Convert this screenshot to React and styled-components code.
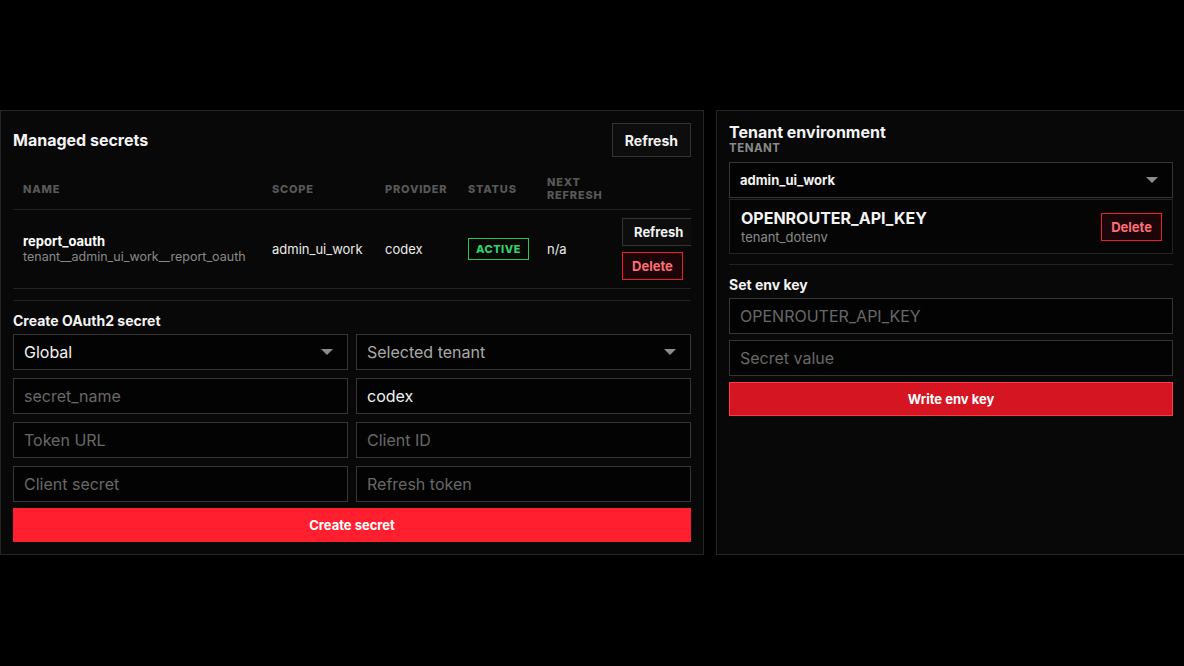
import React from "react";
import styled, { createGlobalStyle } from "styled-components";

const GlobalStyle = createGlobalStyle`
  html, body {
    margin: 0;
    background: #000;
    overflow: hidden;
  }
  * {
    box-sizing: border-box;
  }
  body {
    font-family: Inter, "Noto Sans", "Liberation Sans", sans-serif;
    color: #f2f2f2;
  }
`;

const secrets = [
  {
    name: "report_oauth",
    path: "tenant__admin_ui_work__report_oauth",
    scope: "admin_ui_work",
    provider: "codex",
    status: "ACTIVE",
    next: "n/a",
  },
];

function App() {
  return (
    <>
      <GlobalStyle />
      <Page>
        <Panel>
          <PanelHeader>
            <Title>Managed secrets</Title>
            <GhostButton $size="lg">Refresh</GhostButton>
          </PanelHeader>
          <TableWrap>
            <Table>
              <colgroup>
                <col style={{ width: 249 }} />
                <col style={{ width: 113 }} />
                <col style={{ width: 83 }} />
                <col style={{ width: 79 }} />
                <col style={{ width: 75 }} />
                <col style={{ width: 99 }} />
              </colgroup>
              <thead>
                <tr>
                  <Th>Name</Th>
                  <Th>Scope</Th>
                  <Th>Provider</Th>
                  <Th>Status</Th>
                  <Th>
                    Next
                    <br />
                    Refresh
                  </Th>
                  <Th />
                </tr>
              </thead>
              <tbody>
                {secrets.map((s) => (
                  <tr key={s.name}>
                    <Td>
                      <SecretName>{s.name}</SecretName>
                      <SubText>{s.path}</SubText>
                    </Td>
                    <Td>{s.scope}</Td>
                    <Td>{s.provider}</Td>
                    <Td>
                      <Badge>{s.status}</Badge>
                    </Td>
                    <Td>{s.next}</Td>
                    <ActionCell>
                      <Actions>
                        <GhostButton>Refresh</GhostButton>
                        <DangerButton>Delete</DangerButton>
                      </Actions>
                    </ActionCell>
                  </tr>
                ))}
              </tbody>
            </Table>
          </TableWrap>
          <Section>
            <SectionTitle>Create OAuth2 secret</SectionTitle>
            <FormGrid>
              <SelectBox>Global</SelectBox>
              <SelectBox $muted>Selected tenant</SelectBox>
              <Input placeholder="secret_name" />
              <Input defaultValue="codex" />
              <Input placeholder="Token URL" />
              <Input placeholder="Client ID" />
              <Input placeholder="Client secret" />
              <Input placeholder="Refresh token" />
            </FormGrid>
            <PrimaryButton>Create secret</PrimaryButton>
          </Section>
        </Panel>

        <Panel>
          <Title>Tenant environment</Title>
          <FieldLabel>Tenant</FieldLabel>
          <SelectBox $bold>admin_ui_work</SelectBox>
          <EnvItem>
            <div>
              <EnvKey>OPENROUTER_API_KEY</EnvKey>
              <EnvSource>tenant_dotenv</EnvSource>
            </div>
            <DangerButton>Delete</DangerButton>
          </EnvItem>
          <Section $tight>
            <SectionTitle>Set env key</SectionTitle>
            <Stack>
              <Input placeholder="OPENROUTER_API_KEY" />
              <Input placeholder="Secret value" />
              <PrimaryButton $dark>Write env key</PrimaryButton>
            </Stack>
          </Section>
        </Panel>
      </Page>
    </>
  );
}

const Page = styled.div`
  display: grid;
  grid-template-columns: 704px 470px;
  gap: 12px;
  width: 1186px;
  padding-top: 110px;
`;

const Panel = styled.section`
  display: flex;
  flex-direction: column;
  background: #080808;
  border: 1px solid #242424;
  padding: 12px;
`;

const PanelHeader = styled.div`
  display: flex;
  align-items: center;
  justify-content: space-between;
  margin-bottom: 6px;
`;

const Title = styled.h2`
  margin: 0;
  font-size: 16px;
  line-height: 19px;
  font-weight: 700;
  color: #f4f4f4;
`;

const FieldLabel = styled.div`
  font-size: 11.5px;
  line-height: 13px;
  font-weight: 700;
  letter-spacing: 0.5px;
  text-transform: uppercase;
  color: #8a8a8a;
  margin-bottom: 7px;
`;

const GhostButton = styled.button`
  height: ${(p) => (p.$size === "lg" ? "34px" : "28px")};
  padding: 0 ${(p) => (p.$size === "lg" ? "12px" : "11px")};
  background: #0d0d0d;
  border: 1px solid #333;
  color: #f2f2f2;
  font-family: inherit;
  font-size: ${(p) => (p.$size === "lg" ? "14px" : "13px")};
  font-weight: 700;
  white-space: nowrap;
  cursor: pointer;
`;

const DangerButton = styled.button`
  height: 28px;
  padding: 0 9px;
  background: #1c0508;
  border: 1px solid #e8202e;
  color: #ff6d79;
  font-family: inherit;
  font-size: 13px;
  font-weight: 700;
  cursor: pointer;
`;

const TableWrap = styled.div`
  overflow: hidden;
  width: 100%;
`;

const Table = styled.table`
  width: 698px;
  border-collapse: collapse;
  table-layout: fixed;
  font-size: 13px;
`;

const Th = styled.th`
  text-align: left;
  padding: 13px 10px 7px;
  font-size: 11px;
  line-height: 13px;
  font-weight: 800;
  letter-spacing: 0.8px;
  text-transform: uppercase;
  color: #585858;
  border-bottom: 1px solid #222;
  vertical-align: middle;
`;

const Td = styled.td`
  padding: 0 10px;
  color: #ececec;
  border-bottom: 1px solid #222;
  vertical-align: middle;
  white-space: nowrap;
`;

const ActionCell = styled(Td)`
  padding: 8px 10px;
`;

const Actions = styled.div`
  display: flex;
  flex-direction: column;
  align-items: flex-start;
  gap: 6px;
`;

const SecretName = styled.div`
  font-weight: 700;
  font-size: 13px;
  line-height: 16px;
  color: #fff;
`;

const SubText = styled.div`
  font-size: 12.5px;
  line-height: 16px;
  color: #8a8a8a;
`;

const Badge = styled.span`
  display: inline-block;
  padding: 3px 7px;
  border: 1px solid #27c45f;
  color: #2fd36c;
  font-size: 11px;
  line-height: 14px;
  font-weight: 800;
  letter-spacing: 0.5px;
`;

const Section = styled.div`
  border-top: 1px solid #222;
  margin-top: ${(p) => (p.$tight ? "10px" : "11px")};
  padding-top: 11px;
`;

const SectionTitle = styled.h3`
  margin: 0 0 5px;
  font-size: 14px;
  line-height: 17px;
  font-weight: 700;
  color: #f4f4f4;
`;

const FormGrid = styled.div`
  display: grid;
  grid-template-columns: 1fr 1fr;
  gap: 8px;
  margin-bottom: 6px;
`;

const Stack = styled.div`
  display: flex;
  flex-direction: column;
  gap: 6px;
`;

const fieldBase = `
  height: 36px;
  width: 100%;
  background: #030303;
  border: 1px solid #353535;
  padding: 0 10px;
  font-family: Inter, "Noto Sans", "Liberation Sans", sans-serif;
  font-size: 16px;
  color: #f2f2f2;
`;

const Input = styled.input`
  ${fieldBase}
  outline: none;
  &::placeholder {
    color: #686868;
  }
`;

const SelectBox = styled.div`
  ${fieldBase}
  position: relative;
  display: flex;
  align-items: center;
  color: ${(p) => (p.$muted ? "#a9a9a9" : "#f2f2f2")};
  font-size: ${(p) => (p.$bold ? "13px" : "16px")};
  font-weight: ${(p) => (p.$bold ? 700 : 400)};
  &::after {
    content: "";
    position: absolute;
    right: 14px;
    top: 50%;
    margin-top: -3px;
    border-left: 6px solid transparent;
    border-right: 6px solid transparent;
    border-top: 6px solid #8c8c8c;
  }
`;

const EnvItem = styled.div`
  display: flex;
  align-items: center;
  justify-content: space-between;
  margin-top: 1px;
  height: 55px;
  padding: 0 10px 0 11px;
  border: 1px solid #242424;
  background: #050505;
`;

const EnvKey = styled.div`
  font-size: 16px;
  line-height: 19px;
  font-weight: 700;
  color: #f4f4f4;
`;

const EnvSource = styled.div`
  margin-top: 1px;
  font-size: 13px;
  line-height: 16px;
  color: #8a8a8a;
`;

const PrimaryButton = styled.button`
  width: 100%;
  height: 34px;
  background: ${(p) => (p.$dark ? "#d51522" : "#ff1f2e")};
  border: ${(p) => (p.$dark ? "1px solid #ff3a46" : "none")};
  color: #fff;
  font-family: inherit;
  font-size: 13px;
  font-weight: 700;
  cursor: pointer;
`;

export default App;
